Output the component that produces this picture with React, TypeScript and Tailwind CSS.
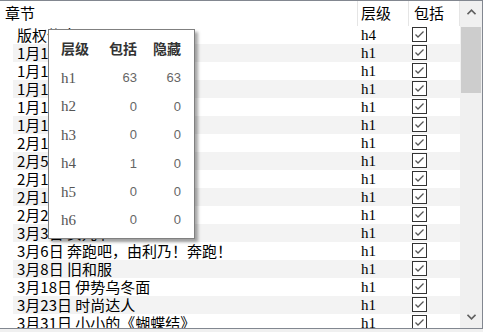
import React from "react";

const rows = [
  { title: "版权信息", level: "h4" },
  { title: "1月1日 新年", level: "h1" },
  { title: "1月10日 初雪", level: "h1" },
  { title: "1月12日 围巾", level: "h1" },
  { title: "1月15日 成人式", level: "h1" },
  { title: "1月18日 热可可", level: "h1" },
  { title: "2月1日 节分", level: "h1" },
  { title: "2月5日 手套", level: "h1" },
  { title: "2月11日 雪祭", level: "h1" },
  { title: "2月14日 巧克力", level: "h1" },
  { title: "2月22日 猫之日", level: "h1" },
  { title: "3月3日 女儿节", level: "h1" },
  { title: "3月6日 奔跑吧，由利乃！奔跑！", level: "h1" },
  { title: "3月8日 旧和服", level: "h1" },
  { title: "3月18日 伊势乌冬面", level: "h1" },
  { title: "3月23日 时尚达人", level: "h1" },
  { title: "3月31日 小小的《蝴蝶结》", level: "h1" },
];

const stats = [
  { level: "h1", inc: 63, hidden: 63 },
  { level: "h2", inc: 0, hidden: 0 },
  { level: "h3", inc: 0, hidden: 0 },
  { level: "h4", inc: 1, hidden: 0 },
  { level: "h5", inc: 0, hidden: 0 },
  { level: "h6", inc: 0, hidden: 0 },
];

const cjk = "font-['Noto_Sans_CJK_SC',sans-serif]";
const serif = "font-['Liberation_Serif','Noto_Sans_CJK_SC',serif]";

const Check = () => (
  <svg width="15" height="15" viewBox="0 0 15 15">
    <rect x="0.5" y="0.5" width="14" height="14" fill="white" stroke="#333333" />
    <polyline points="3.5,7.5 6,10 11.5,4.5" fill="none" stroke="#555555" strokeWidth="1.3" />
  </svg>
);

const Chevron = ({ down }: { down?: boolean }) => (
  <svg width="9" height="6" viewBox="0 0 9 6">
    <polyline
      points={down ? "0.5,0.8 4.5,4.8 8.5,0.8" : "0.5,5.2 4.5,1.2 8.5,5.2"}
      fill="none"
      stroke="#606060"
      strokeWidth="1.6"
    />
  </svg>
);

export default function App() {
  return (
    <div className="relative w-[483px] h-[332px] bg-[#f0f0f0] overflow-hidden">
      <div className="flex h-[329px] w-[483px] border-t border-r border-b border-[#828790] bg-white">
        <div className="flex flex-col w-[460px] overflow-hidden">
          <div className={`flex h-[25px] shrink-0 text-[15px] text-black ${cjk}`}>
            <div className="w-[358px] pl-[5px] flex items-center border-r border-[#e5e5e5]">章节</div>
            <div className="w-[51px] pl-[3px] flex items-center border-r border-[#e5e5e5]">层级</div>
            <div className="w-[51px] pl-[5px] flex items-center border-r border-[#e5e5e5]">包括</div>
          </div>
          <div className="flex flex-col">
            {rows.map((r, i) => (
              <div
                key={i}
                className={`flex h-[18px] shrink-0 ml-[13px] w-[447px] ${i % 2 === 1 ? "bg-[#f3f3f3]" : "bg-white"}`}
              >
                <div className={`w-[345px] pl-[4px] flex items-center text-[15px] text-black whitespace-nowrap ${cjk}`}>
                  {r.title}
                </div>
                <div className={`w-[51px] pl-[3px] flex items-center text-[15px] text-black ${serif}`}>{r.level}</div>
                <div className="w-[51px] pl-[3px] pt-[1px]">
                  <Check />
                </div>
              </div>
            ))}
          </div>
        </div>
        <div className="flex flex-col w-[22px] bg-[#f0f0f0]">
          <div className="h-[22px] flex items-center justify-center">
            <Chevron />
          </div>
          <div className="flex-1 px-[1px] pt-[4px]">
            <div className="h-[66px] bg-[#cdcdcd]" />
          </div>
          <div className="h-[22px] flex items-center justify-center">
            <Chevron down />
          </div>
        </div>
      </div>

      <div className="absolute left-[48px] top-[29px] w-[147px] h-[210px] bg-white border border-[#808080] shadow-[3px_3px_3px_rgba(0,0,0,0.35)] pl-[12px] pt-[4px]">
        <div className={`flex h-[28px] items-center text-[14px] font-bold text-[#333333] ${cjk}`}>
          <div className="w-[35px]">层级</div>
          <div className="w-[41px] text-right">包括</div>
          <div className="w-[44px] text-right">隐藏</div>
        </div>
        <div className="mt-[2px]">
          {stats.map((s) => (
            <div key={s.level} className="flex h-[28.4px] items-center">
              <div className={`w-[35px] text-[15px] text-[#555555] ${serif}`}>{s.level}</div>
              <div className="w-[41px] text-right text-[13px] text-[#666666] font-['Liberation_Sans',sans-serif]">{s.inc}</div>
              <div className="w-[44px] text-right text-[13px] text-[#666666] font-['Liberation_Sans',sans-serif]">{s.hidden}</div>
            </div>
          ))}
        </div>
      </div>
    </div>
  );
}
